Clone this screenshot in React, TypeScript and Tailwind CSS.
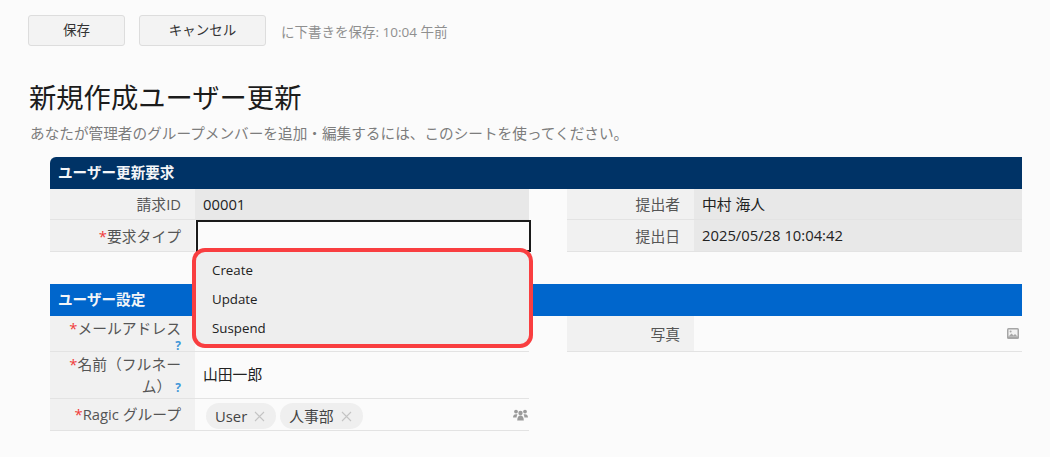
const FONT = '[font-family:"Open_Sans","Noto_Sans_CJK_JP",sans-serif]';

function Req() {
  return <span className="text-[#f03a3a]">*</span>;
}

function Help() {
  return <span className="ml-1 text-[12px] font-bold leading-none text-[#3f97d8]">?</span>;
}

function Row({
  label,
  height,
  grey,
  labelWidth = 'w-[145px]',
  children,
}: {
  label: React.ReactNode;
  height: string;
  grey?: boolean;
  labelWidth?: string;
  children?: React.ReactNode;
}) {
  return (
    <div className={`flex ${height} border-b border-[#e3e3e3]`}>
      <div
        className={`${labelWidth} shrink-0 bg-[#f1f1f1] pr-[14px] pl-2 flex items-center justify-end text-right text-[14.8px] leading-[22px] text-[#555555]`}
      >
        <div>{label}</div>
      </div>
      <div className={`flex-1 min-w-0 flex items-center pl-[8px] text-[14.8px] text-[#222222] ${grey ? 'bg-[#e8e8e8]' : ''}`}>
        {children}
      </div>
    </div>
  );
}

function Chip({ text }: { text: string }) {
  return (
    <span className="h-[26px] rounded-full bg-[#efefef] pl-[9px] pr-[11px] flex items-center gap-[7px] text-[14.8px] text-[#444444]">
      {text}
      <svg width="11" height="11" viewBox="0 0 11 11" stroke="#c4c4c4" strokeWidth="1.1">
        <path d="M1 1l9 9M10 1l-9 9" />
      </svg>
    </span>
  );
}

function GroupIcon() {
  return (
    <svg width="15" height="12" viewBox="0 0 15 12" fill="#9b9b9b">
      <circle cx="3" cy="2.6" r="1.9" />
      <circle cx="12" cy="2.6" r="1.9" />
      <circle cx="7.5" cy="4" r="2.2" />
      <path d="M0 8.6C0 6.4 1.2 5.2 3 5.2c.6 0 1.1.1 1.5.4C3.9 6.4 3.6 7.4 3.6 8.6H0zM15 8.6c0-2.2-1.2-3.4-3-3.4-.6 0-1.1.1-1.5.4.6.8.9 1.8.9 3H15z" />
      <path d="M4.2 11.5c0-3 1.3-4.9 3.3-4.9s3.3 1.9 3.3 4.9H4.2z" />
    </svg>
  );
}

function ImageIcon() {
  return (
    <svg width="12" height="11" viewBox="0 0 12 11">
      <rect x="0" y="0" width="12" height="11" rx="1.5" fill="#a6a6a6" />
      <rect x="1.5" y="1.5" width="9" height="7" fill="#f2f2f2" />
      <circle cx="3.6" cy="3.5" r="1" fill="#a6a6a6" />
      <path d="M1.5 8.5l3-3 2 2 1.5-1.5 2.5 2.5z" fill="#a6a6a6" />
    </svg>
  );
}

function SectionHeader({ title, color }: { title: string; color: string }) {
  return (
    <div className={`h-8 flex items-center pl-2 text-[14.6px] font-bold text-[#f4f6f8] ${color}`}>
      {title}
    </div>
  );
}

export default function App() {
  return (
    <div className={`${FONT} w-[1050px] h-[457px] overflow-hidden bg-[#fbfbfb]`}>
      <div className="pt-[15px] pl-[28px] flex items-center">
        <button className="w-[97px] h-[31px] rounded-[3px] border border-[#dddddd] bg-[#f3f3f3] text-[13.5px] text-[#333333]">
          保存
        </button>
        <button className="ml-[14px] w-[127px] h-[31px] rounded-[3px] border border-[#dddddd] bg-[#f3f3f3] text-[13.5px] text-[#333333]">
          キャンセル
        </button>
        <span className="ml-[15px] mt-[3px] text-[13.5px] text-[#8f8f8f]">に下書きを保存: 10:04 午前</span>
      </div>

      <h1 className="mt-[33px] ml-[29px] text-[27.3px] leading-[38px] font-normal text-[#1c1c1c]">新規作成ユーザー更新</h1>
      <p className="mt-[6px] ml-[30px] text-[14.65px] leading-[20px] text-[#7d7d7d]">
        あなたが管理者のグループメンバーを追加・編集するには、このシートを使ってください。
      </p>

      <div className="mt-[14px] ml-[50px] w-[972px]">
        <div className="rounded-tl-[6px] overflow-hidden">
          <SectionHeader title="ユーザー更新要求" color="bg-[#003366]" />
        </div>
        <div className="flex gap-[38px]">
          <div className="w-[479px]">
            <Row label="請求ID" height="h-[31px]" grey>
              00001
            </Row>
            <div className="relative">
              <Row label={<><Req />要求タイプ</>} height="h-[32px]" />
              <div className="absolute left-[146px] top-0 w-[335px] h-[32px] border-2 border-[#1a1a1a] bg-[#fbfbfb]" />
              <div className="absolute z-10 left-[142px] top-[28px] w-[341px] h-[100px] rounded-[13px] border-[4px] border-[#f93e40] bg-[#eeeeee] pt-[4px] pl-[16px] text-[13.3px] leading-[29px] text-[#222222]">
                <div>Create</div>
                <div>Update</div>
                <div>Suspend</div>
              </div>
            </div>
          </div>
          <div className="w-[455px]">
            <Row label="提出者" height="h-[31px]" labelWidth="w-[127px]" grey>
              中村 海人
            </Row>
            <Row label="提出日" height="h-[32px]" labelWidth="w-[127px]" grey>
              2025/05/28 10:04:42
            </Row>
          </div>
        </div>

        <div className="mt-[32px]">
          <SectionHeader title="ユーザー設定" color="bg-[#0066cc]" />
        </div>
        <div className="flex gap-[38px]">
          <div className="w-[479px]">
            <Row
              label={
                <>
                  <Req />メールアドレス
                  <div className="h-[11px] leading-[11px]">
                    <Help />
                  </div>
                </>
              }
              height="h-[36px]"
            />
            <Row
              label={
                <>
                  <Req />名前（フルネー
                  <br />
                  ム）
                  <Help />
                </>
              }
              height="h-[47px]"
            >
              <span className="pb-[2px]">山田一郎</span>
            </Row>
            <Row label={<div className="pb-[2px]"><Req />Ragic グループ</div>} height="h-[32px]">
              <div className="flex flex-1 items-center gap-[4px] pl-[3px] pr-[1px]">
                <div className="pt-[3px] flex gap-[4px]">
                  <Chip text="User" />
                  <Chip text="人事部" />
                </div>
                <span className="ml-auto">
                  <GroupIcon />
                </span>
              </div>
            </Row>
          </div>
          <div className="w-[455px]">
            <Row label="写真" height="h-[36px]" labelWidth="w-[127px]">
              <span className="ml-auto mr-[3px]">
                <ImageIcon />
              </span>
            </Row>
          </div>
        </div>
      </div>
    </div>
  );
}
